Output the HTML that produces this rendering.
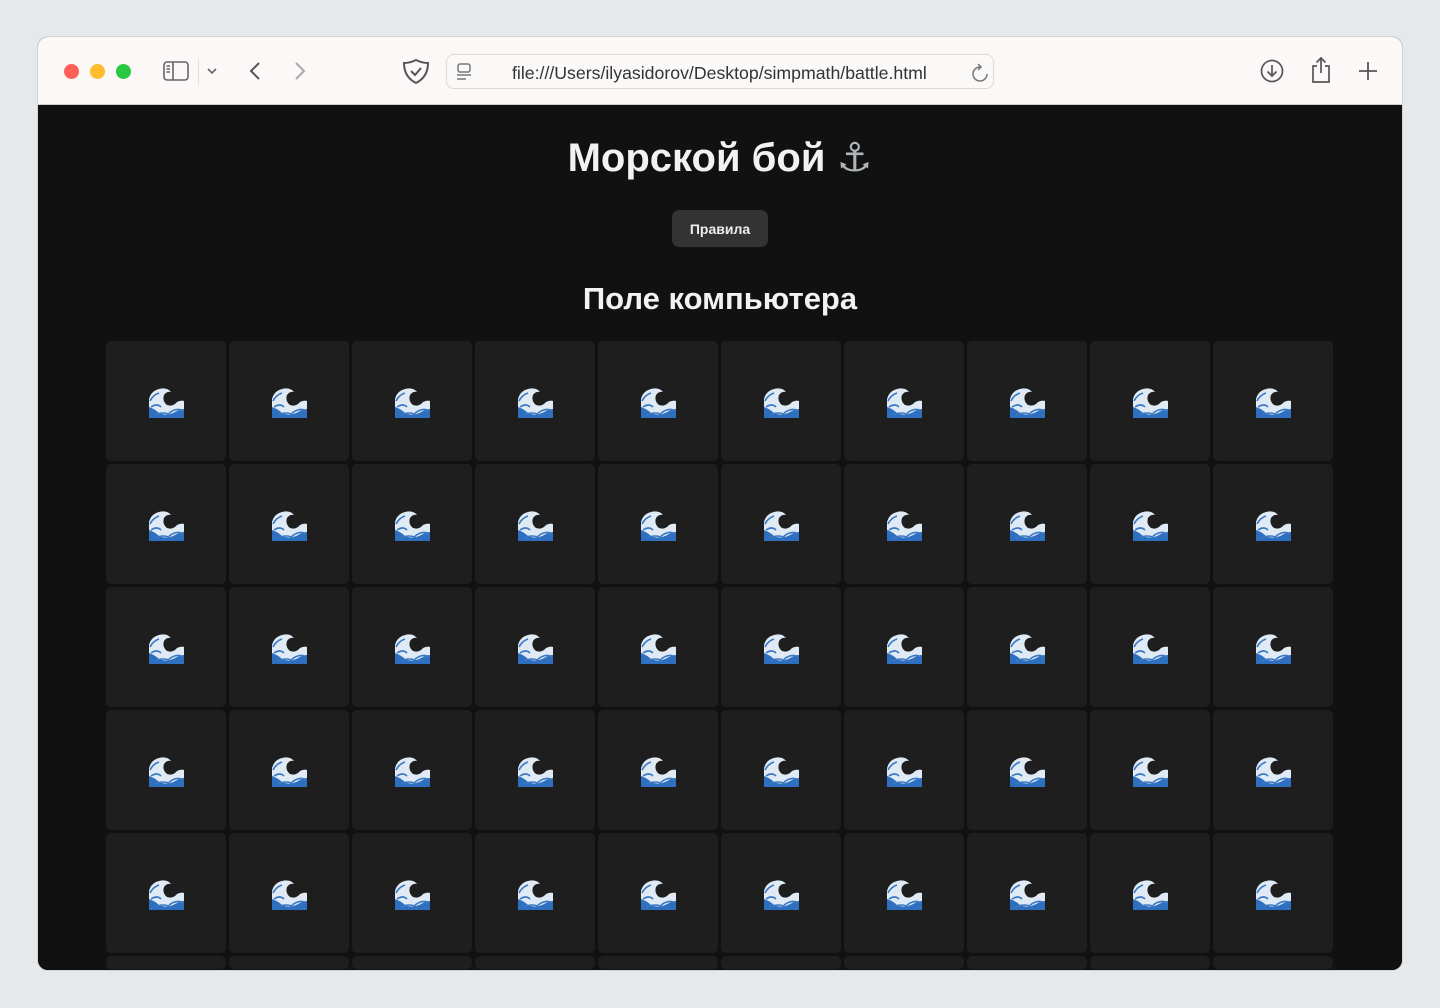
<!DOCTYPE html>
<html><head><meta charset="utf-8"><style>
*{margin:0;padding:0;box-sizing:border-box}
html,body{overflow:hidden}
body{width:1440px;height:1008px;background:#e6e9ec;font-family:"Liberation Sans",sans-serif;position:relative;overflow:hidden}
.win{position:absolute;left:38px;top:37px;width:1364px;height:933px;border-radius:10px;overflow:hidden;background:#111;box-shadow:0 0 0 1px #d0d3d6}
.bar{position:absolute;left:0;top:0;width:100%;height:68px;background:#fbf8f7;border-bottom:1px solid #ccc}
.dot{position:absolute;top:27px;width:15px;height:15px;border-radius:50%}
.addr{position:absolute;left:408px;top:17px;width:548px;height:35px;border:1px solid #dedad9;border-radius:8px;background:#fbf9f8}
.addr span{position:absolute;left:65px;top:8px;font-size:17.7px;color:#333}
.content{position:absolute;left:0;top:68px;width:100%;bottom:0;background:#111;overflow:hidden}
h1{position:absolute;left:0;width:100%;top:30px;text-align:center;color:#f2f2f2;font-size:40px;font-weight:bold}
h1 span{color:#aeb4b8;font-family:"DejaVu Sans",sans-serif;font-weight:normal}
.btn{position:absolute;left:634px;top:105px;width:96px;height:37px;background:#333;border-radius:7px;color:#eee;font-size:14px;text-align:center;line-height:39px;font-weight:bold}
h2{position:absolute;left:0;width:100%;top:176px;text-align:center;color:#f2f2f2;font-size:31px;font-weight:bold}
.grid{position:absolute;left:68px;top:236px;display:grid;grid-template-columns:repeat(10,120px);grid-auto-rows:120px;gap:3px}
.c{background:#1e1e1e;border-radius:5px;display:flex;align-items:center;justify-content:center}
.c svg{width:38px;height:31px;margin-top:3px}
</style></head><body>
<svg width="0" height="0" style="position:absolute"><defs>
<symbol id="w" viewBox="0 0 38 31">
<path d="M2 31 L2 12 Q4 4 12 2 Q20 0 24 5 Q20 4 17 8 Q15 14 20 18 Q26 20 30 15 Q34 13 37 14 L37 31 Z" fill="#dfeaf5"/>
<path d="M2 31 L2 20 Q8 22 12 26 Q20 30 30 24 Q34 22 37 22 L37 31 Z" fill="#2f6fbf"/>
<path d="M3 14 Q6 8 12 6 M4 20 Q10 16 14 20 M8 28 Q16 24 24 28 M22 26 Q30 20 36 24" stroke="#3a78c4" stroke-width="1.6" fill="none"/>
</symbol></defs></svg>
<div class="win">
 <div class="bar">
  <div class="dot" style="left:26px;background:#fe5f57"></div>
  <div class="dot" style="left:52px;background:#febc2e"></div>
  <div class="dot" style="left:78px;background:#28c840"></div>
  <svg style="position:absolute;left:125px;top:24px" width="26" height="20" viewBox="0 0 26 20" fill="none" stroke="#666" stroke-width="1.6"><rect x="1" y="1" width="24" height="18" rx="3"/><line x1="10" y1="1" x2="10" y2="19"/><line x1="3.5" y1="5" x2="7" y2="5"/><line x1="3.5" y1="8" x2="7" y2="8"/><line x1="3.5" y1="11" x2="7" y2="11"/></svg>
  <div style="position:absolute;left:160px;top:22px;width:1px;height:26px;background:#e0dddc"></div>
  <svg style="position:absolute;left:168px;top:30px" width="12" height="8" viewBox="0 0 12 8" fill="none" stroke="#666" stroke-width="1.6"><path d="M2 2 L6 6 L10 2"/></svg>
  <svg style="position:absolute;left:210px;top:24px" width="14" height="20" viewBox="0 0 14 20" fill="none" stroke="#555" stroke-width="2"><path d="M11 2 L3 10 L11 18"/></svg>
  <svg style="position:absolute;left:255px;top:24px" width="14" height="20" viewBox="0 0 14 20" fill="none" stroke="#aaa" stroke-width="2"><path d="M3 2 L11 10 L3 18"/></svg>
  <svg style="position:absolute;left:364px;top:21px" width="28" height="27" viewBox="0 0 28 27" fill="none" stroke="#555" stroke-width="2"><path d="M14 2 Q20 5 26 5 Q26 19 14 25 Q2 19 2 5 Q8 5 14 2Z"/><path d="M9 13 L13 17 L19 10"/></svg>
  <div class="addr"><svg style="position:absolute;left:9px;top:8px" width="16" height="18" viewBox="0 0 16 18" fill="none" stroke="#777" stroke-width="1.5"><rect x="2" y="1" width="12" height="8" rx="2"/><line x1="1" y1="12" x2="15" y2="12"/><line x1="1" y1="16" x2="10" y2="16"/></svg><span>file:///Users/ilyasidorov/Desktop/simpmath/battle.html</span>
  <svg style="position:absolute;left:524px;top:8px" width="18" height="20" viewBox="0 0 18 20" fill="none" stroke="#777" stroke-width="1.5"><path d="M9 4 A7 7 0 1 0 16 11"/><path d="M7 1 L10 4 L7 7"/></svg></div>
  <svg style="position:absolute;left:1222px;top:22px" width="24" height="24" viewBox="0 0 24 24" fill="none" stroke="#555" stroke-width="1.7"><circle cx="12" cy="12" r="10.5"/><path d="M12 6 V17 M7.5 12.5 L12 17 L16.5 12.5"/></svg>
  <svg style="position:absolute;left:1272px;top:19px" width="22" height="28" viewBox="0 0 22 28" fill="none" stroke="#555" stroke-width="1.7"><path d="M7 10 H3 V26 H19 V10 H15"/><path d="M11 2 V17 M6.5 6.5 L11 2 L15.5 6.5"/></svg>
  <svg style="position:absolute;left:1320px;top:24px" width="20" height="20" viewBox="0 0 20 20" stroke="#555" stroke-width="1.8"><path d="M10 1 V19 M1 10 H19"/></svg>
 </div>
 <div class="content">
  <h1>Морской бой <span>⚓&#xFE0E;</span></h1>
  <div class="btn">Правила</div>
  <h2>Поле компьютера</h2>
  <div class="grid">
<div class="c"><svg><use href="#w"/></svg></div><div class="c"><svg><use href="#w"/></svg></div><div class="c"><svg><use href="#w"/></svg></div><div class="c"><svg><use href="#w"/></svg></div><div class="c"><svg><use href="#w"/></svg></div><div class="c"><svg><use href="#w"/></svg></div><div class="c"><svg><use href="#w"/></svg></div><div class="c"><svg><use href="#w"/></svg></div><div class="c"><svg><use href="#w"/></svg></div><div class="c"><svg><use href="#w"/></svg></div>
<div class="c"><svg><use href="#w"/></svg></div><div class="c"><svg><use href="#w"/></svg></div><div class="c"><svg><use href="#w"/></svg></div><div class="c"><svg><use href="#w"/></svg></div><div class="c"><svg><use href="#w"/></svg></div><div class="c"><svg><use href="#w"/></svg></div><div class="c"><svg><use href="#w"/></svg></div><div class="c"><svg><use href="#w"/></svg></div><div class="c"><svg><use href="#w"/></svg></div><div class="c"><svg><use href="#w"/></svg></div>
<div class="c"><svg><use href="#w"/></svg></div><div class="c"><svg><use href="#w"/></svg></div><div class="c"><svg><use href="#w"/></svg></div><div class="c"><svg><use href="#w"/></svg></div><div class="c"><svg><use href="#w"/></svg></div><div class="c"><svg><use href="#w"/></svg></div><div class="c"><svg><use href="#w"/></svg></div><div class="c"><svg><use href="#w"/></svg></div><div class="c"><svg><use href="#w"/></svg></div><div class="c"><svg><use href="#w"/></svg></div>
<div class="c"><svg><use href="#w"/></svg></div><div class="c"><svg><use href="#w"/></svg></div><div class="c"><svg><use href="#w"/></svg></div><div class="c"><svg><use href="#w"/></svg></div><div class="c"><svg><use href="#w"/></svg></div><div class="c"><svg><use href="#w"/></svg></div><div class="c"><svg><use href="#w"/></svg></div><div class="c"><svg><use href="#w"/></svg></div><div class="c"><svg><use href="#w"/></svg></div><div class="c"><svg><use href="#w"/></svg></div>
<div class="c"><svg><use href="#w"/></svg></div><div class="c"><svg><use href="#w"/></svg></div><div class="c"><svg><use href="#w"/></svg></div><div class="c"><svg><use href="#w"/></svg></div><div class="c"><svg><use href="#w"/></svg></div><div class="c"><svg><use href="#w"/></svg></div><div class="c"><svg><use href="#w"/></svg></div><div class="c"><svg><use href="#w"/></svg></div><div class="c"><svg><use href="#w"/></svg></div><div class="c"><svg><use href="#w"/></svg></div>
<div class="c" style="height:13px"></div><div class="c" style="height:13px"></div><div class="c" style="height:13px"></div><div class="c" style="height:13px"></div><div class="c" style="height:13px"></div><div class="c" style="height:13px"></div><div class="c" style="height:13px"></div><div class="c" style="height:13px"></div><div class="c" style="height:13px"></div><div class="c" style="height:13px"></div>
  </div>
 </div>
</div>
</body></html>
